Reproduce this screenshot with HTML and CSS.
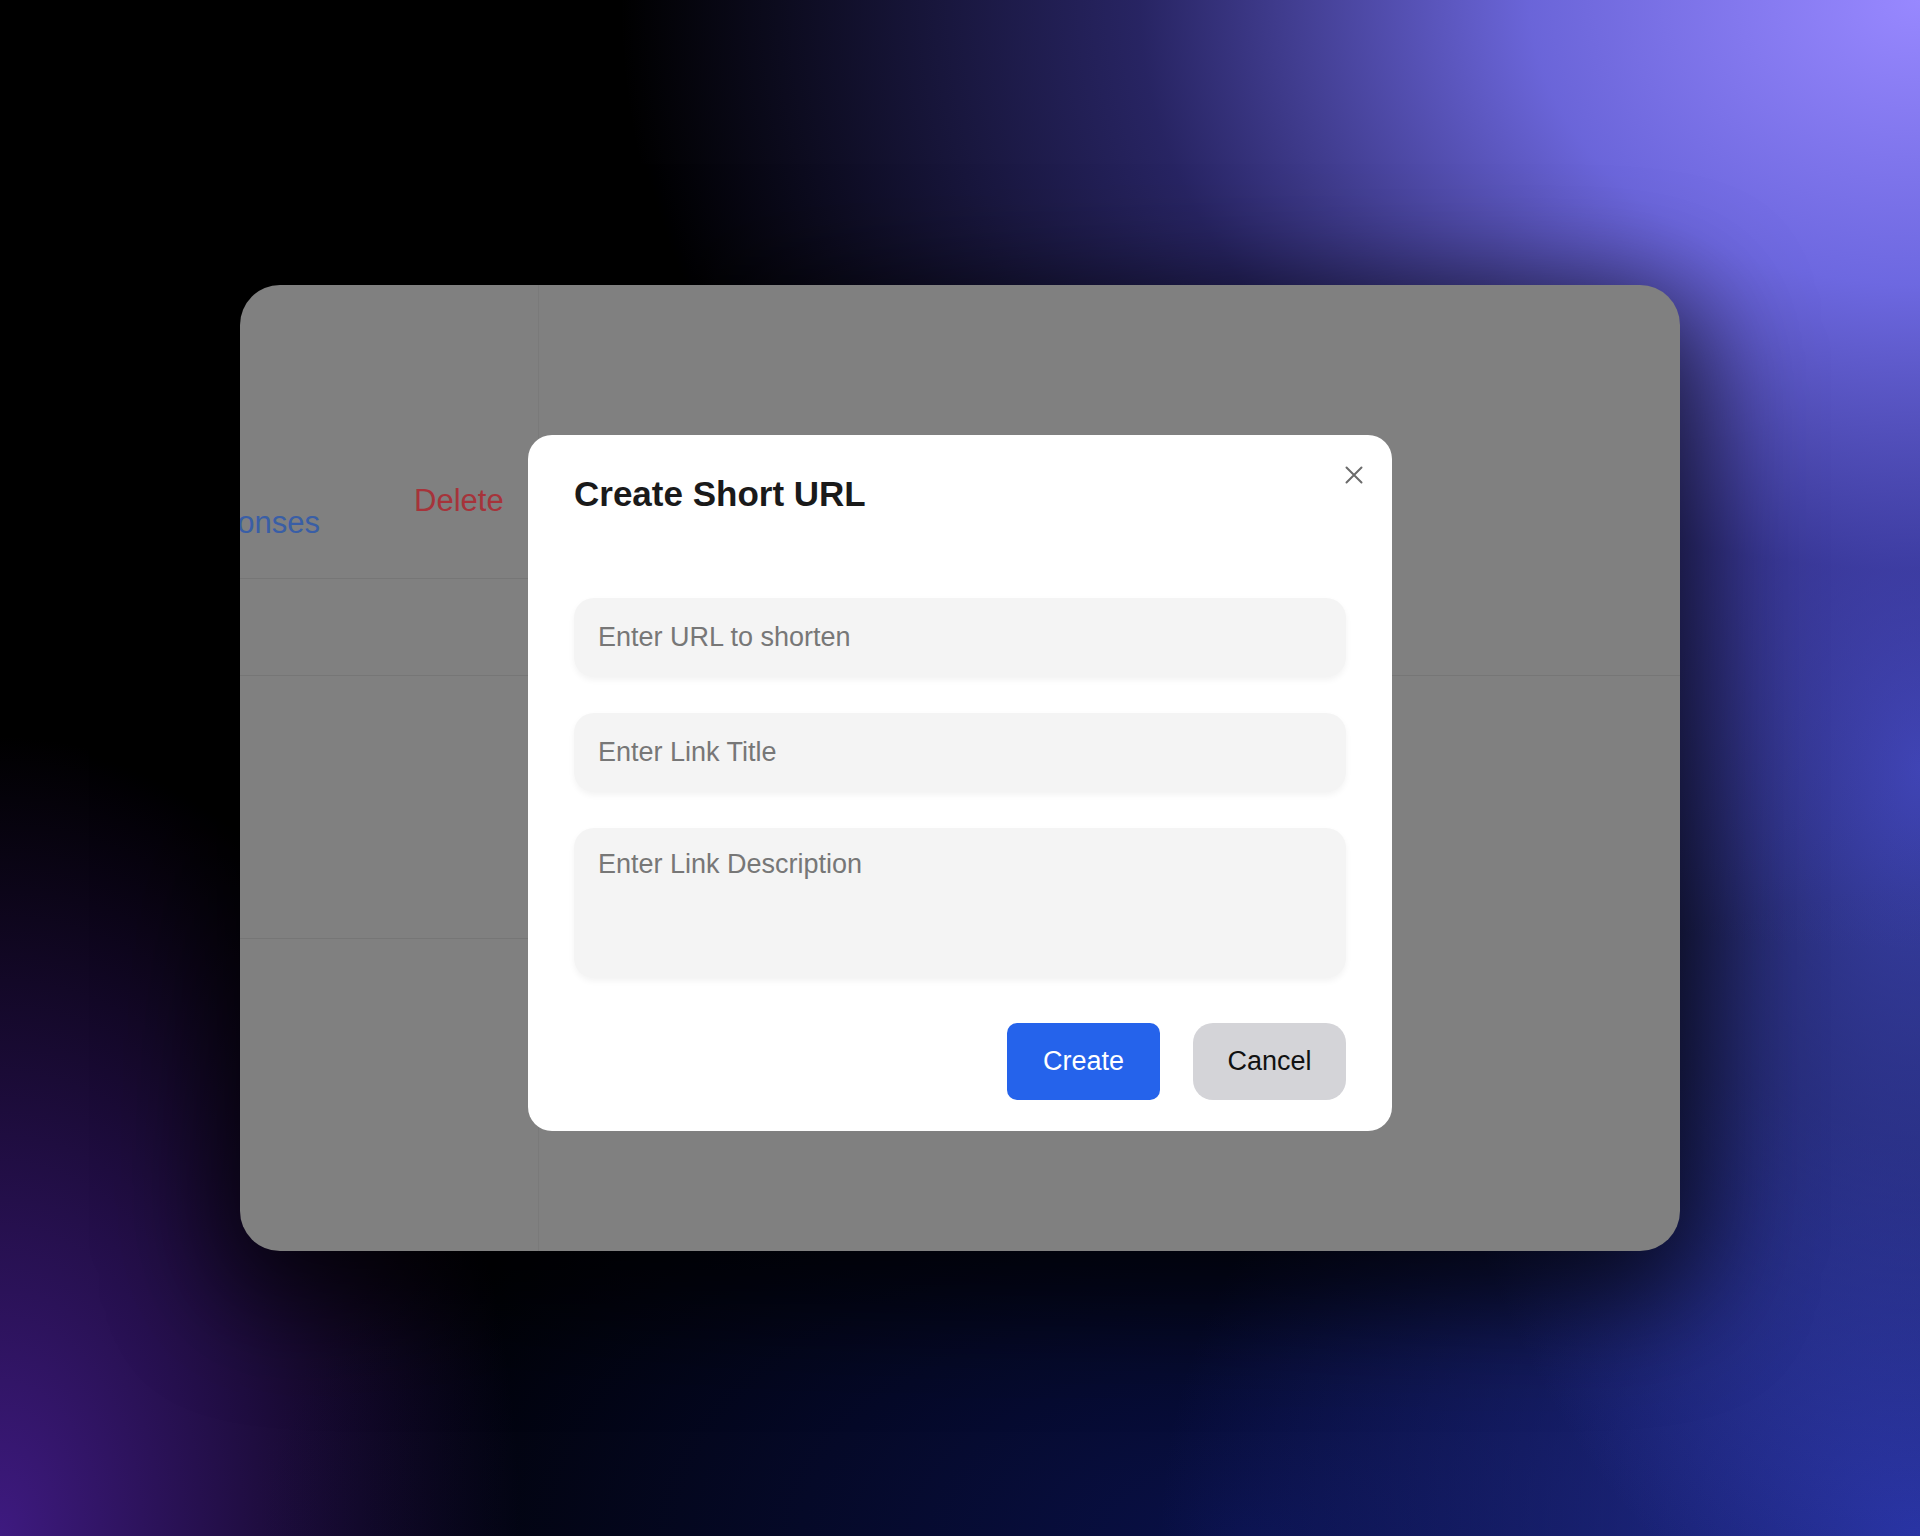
FILE: index.html
```html
<!DOCTYPE html>
<html lang="en">
<head>
    <meta charset="UTF-8">
    <meta name="viewport" content="width=device-width, initial-scale=1.0">
    <title>Short Links</title>
    <link rel="stylesheet" href="styles.css">
</head>
<body>
    <div class="window">
        <!-- dimmed page behind the dialog -->
        <aside class="sidebar">
            <div class="sidebar-top"></div>
            <div class="table-row head">
                <div class="cell responses">View<br>Responses</div>
                <div class="cell delete">Delete</div>
            </div>
            <div class="table-row short"></div>
            <div class="table-row tall"></div>
        </aside>
        <main class="content">
            <div class="content-top"></div>
        </main>

        <div class="backdrop">
            <div class="modal">
                <button class="close-button" aria-label="Close">
                    <svg width="18" height="18" viewBox="0 0 18 18" fill="none" stroke="currentColor" stroke-width="2" stroke-linecap="round">
                        <path d="M1.5 1.5 L16.5 16.5 M16.5 1.5 L1.5 16.5"/>
                    </svg>
                </button>
                <h2>Create Short URL</h2>
                <form class="link-form">
                    <input type="text" placeholder="Enter URL to shorten">
                    <input type="text" placeholder="Enter Link Title">
                    <textarea placeholder="Enter Link Description"></textarea>
                    <div class="actions">
                        <button type="button" class="btn-create">Create</button>
                        <button type="button" class="btn-cancel">Cancel</button>
                    </div>
                </form>
            </div>
        </div>
    </div>
</body>
</html>
```

FILE: styles.css
```css
* {
    margin: 0;
    padding: 0;
    box-sizing: border-box;
}

body {
    font-family: 'Liberation Sans', Arial, sans-serif;
    min-height: 100vh;
    display: flex;
    align-items: center;
    justify-content: center;
    background:
        radial-gradient(ellipse 1300px 950px at 100% 0%, rgba(152, 136, 255, 1) 0%, rgba(118, 112, 240, 0.9) 30%, rgba(72, 66, 180, 0.55) 60%, rgba(0, 0, 0, 0) 100%),
        radial-gradient(ellipse 520px 900px at 100% 50%, rgba(76, 86, 226, 0.8), rgba(0, 0, 0, 0) 100%),
        radial-gradient(ellipse 760px 640px at 100% 100%, rgba(40, 52, 170, 0.9), rgba(0, 0, 0, 0) 100%),
        radial-gradient(ellipse 1000px 520px at 65% 100%, rgba(10, 18, 80, 0.9), rgba(0, 0, 0, 0) 100%),
        radial-gradient(ellipse 520px 800px at 0% 100%, rgba(62, 26, 128, 1), rgba(0, 0, 0, 0) 100%),
        #000;
}

/* app window, shown dimmed */
.window {
    position: relative;
    width: 1440px;
    height: 966px;
    display: flex;
    background: #808080;
    border-radius: 40px;
    overflow: hidden;
    box-shadow: 0 30px 110px 20px rgba(0, 0, 0, 0.7);
}

.sidebar {
    width: 299px;
    flex-shrink: 0;
    border-right: 1px solid #7a7a7a;
}

.sidebar-top {
    height: 138px;
}

.table-row {
    border-bottom: 1px solid #767676;
}

.table-row.head {
    height: 156px;
    display: flex;
    align-items: center;
    gap: 94px;
    margin-left: -75px;
}

.table-row.short {
    height: 97px;
}

.table-row.tall {
    height: 263px;
}

.cell {
    font-size: 31px;
    line-height: 36px;
    white-space: nowrap;
}

.cell.responses {
    color: #395ea6;
    padding-top: 8px;
}

.cell.delete {
    color: #a6333a;
}

.content {
    flex: 1;
}

.content-top {
    height: 391px;
    border-bottom: 1px solid #767676;
}

/* dialog */
.backdrop {
    position: absolute;
    inset: 0;
    display: flex;
    justify-content: center;
    align-items: flex-start;
    padding-top: 150px;
}

.modal {
    position: relative;
    width: 864px;
    background: #fff;
    border-radius: 24px;
    padding: 39px 46px 31px;
}

.modal h2 {
    font-size: 35px;
    line-height: 40px;
    font-weight: 700;
    color: #1a1a1a;
    margin-bottom: 84px;
}

.close-button {
    position: absolute;
    top: 22px;
    right: 20px;
    width: 36px;
    height: 36px;
    display: flex;
    align-items: center;
    justify-content: center;
    background: none;
    border: none;
    color: #6b6b6b;
    cursor: pointer;
}

.link-form {
    display: flex;
    flex-direction: column;
    gap: 36px;
}

.link-form input,
.link-form textarea {
    width: 100%;
    border: none;
    outline: none;
    background: #f4f4f4;
    border-radius: 20px;
    font-family: inherit;
    font-size: 27px;
    color: #222;
    padding: 0 24px;
    box-shadow: 0 3px 6px rgba(0, 0, 0, 0.05);
}

.link-form input {
    height: 79px;
}

.link-form textarea {
    height: 150px;
    padding-top: 21px;
    resize: none;
}

.link-form ::placeholder {
    color: #777;
}

.actions {
    display: flex;
    justify-content: flex-end;
    gap: 33px;
    margin-top: 9px;
}

.actions button {
    width: 153px;
    height: 77px;
    border: none;
    font-family: inherit;
    font-size: 27px;
    cursor: pointer;
}

.btn-create {
    background: #2563eb;
    color: #fff;
    border-radius: 10px;
}

.btn-cancel {
    background: #d4d4d8;
    color: #111;
    border-radius: 20px;
}
```
